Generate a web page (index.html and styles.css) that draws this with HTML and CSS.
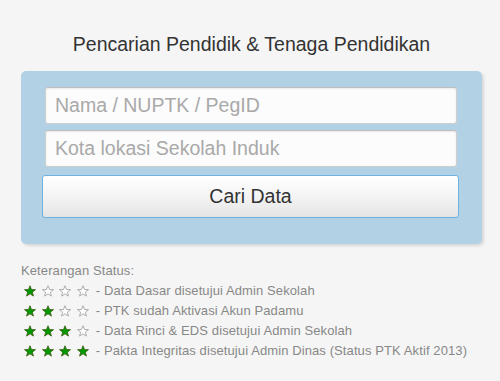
FILE: index.html
```html
<!DOCTYPE html>
<html>
<head>
<meta charset="utf-8">
<link rel="stylesheet" href="styles.css">
</head>
<body>
<div class="wrap">
  <h1 class="title">Pencarian Pendidik &amp; Tenaga Pendidikan</h1>
  <div class="panel">
    <input class="field" type="text" placeholder="Nama / NUPTK / PegID">
    <input class="field" type="text" placeholder="Kota lokasi Sekolah Induk">
    <button class="btn" type="button">Cari Data</button>
  </div>
  <div class="legend">
    <div class="legend-title">Keterangan Status:</div>
    <div class="row">
      <span class="stars">
        <svg class="star" viewBox="0 0 24 24"><polygon class="on" points="12,1.5 15,9 23,9.3 16.7,14.3 18.9,22.2 12,17.6 5.1,22.2 7.3,14.3 1,9.3 9,9"/></svg>
        <svg class="star" viewBox="0 0 24 24"><polygon class="off" points="12,1.5 15,9 23,9.3 16.7,14.3 18.9,22.2 12,17.6 5.1,22.2 7.3,14.3 1,9.3 9,9"/></svg>
        <svg class="star" viewBox="0 0 24 24"><polygon class="off" points="12,1.5 15,9 23,9.3 16.7,14.3 18.9,22.2 12,17.6 5.1,22.2 7.3,14.3 1,9.3 9,9"/></svg>
        <svg class="star" viewBox="0 0 24 24"><polygon class="off" points="12,1.5 15,9 23,9.3 16.7,14.3 18.9,22.2 12,17.6 5.1,22.2 7.3,14.3 1,9.3 9,9"/></svg>
      </span>
      <span class="desc">- Data Dasar disetujui Admin Sekolah</span>
    </div>
    <div class="row">
      <span class="stars">
        <svg class="star" viewBox="0 0 24 24"><polygon class="on" points="12,1.5 15,9 23,9.3 16.7,14.3 18.9,22.2 12,17.6 5.1,22.2 7.3,14.3 1,9.3 9,9"/></svg>
        <svg class="star" viewBox="0 0 24 24"><polygon class="on" points="12,1.5 15,9 23,9.3 16.7,14.3 18.9,22.2 12,17.6 5.1,22.2 7.3,14.3 1,9.3 9,9"/></svg>
        <svg class="star" viewBox="0 0 24 24"><polygon class="off" points="12,1.5 15,9 23,9.3 16.7,14.3 18.9,22.2 12,17.6 5.1,22.2 7.3,14.3 1,9.3 9,9"/></svg>
        <svg class="star" viewBox="0 0 24 24"><polygon class="off" points="12,1.5 15,9 23,9.3 16.7,14.3 18.9,22.2 12,17.6 5.1,22.2 7.3,14.3 1,9.3 9,9"/></svg>
      </span>
      <span class="desc">- PTK sudah Aktivasi Akun Padamu</span>
    </div>
    <div class="row">
      <span class="stars">
        <svg class="star" viewBox="0 0 24 24"><polygon class="on" points="12,1.5 15,9 23,9.3 16.7,14.3 18.9,22.2 12,17.6 5.1,22.2 7.3,14.3 1,9.3 9,9"/></svg>
        <svg class="star" viewBox="0 0 24 24"><polygon class="on" points="12,1.5 15,9 23,9.3 16.7,14.3 18.9,22.2 12,17.6 5.1,22.2 7.3,14.3 1,9.3 9,9"/></svg>
        <svg class="star" viewBox="0 0 24 24"><polygon class="on" points="12,1.5 15,9 23,9.3 16.7,14.3 18.9,22.2 12,17.6 5.1,22.2 7.3,14.3 1,9.3 9,9"/></svg>
        <svg class="star" viewBox="0 0 24 24"><polygon class="off" points="12,1.5 15,9 23,9.3 16.7,14.3 18.9,22.2 12,17.6 5.1,22.2 7.3,14.3 1,9.3 9,9"/></svg>
      </span>
      <span class="desc">- Data Rinci &amp; EDS disetujui Admin Sekolah</span>
    </div>
    <div class="row">
      <span class="stars">
        <svg class="star" viewBox="0 0 24 24"><polygon class="on" points="12,1.5 15,9 23,9.3 16.7,14.3 18.9,22.2 12,17.6 5.1,22.2 7.3,14.3 1,9.3 9,9"/></svg>
        <svg class="star" viewBox="0 0 24 24"><polygon class="on" points="12,1.5 15,9 23,9.3 16.7,14.3 18.9,22.2 12,17.6 5.1,22.2 7.3,14.3 1,9.3 9,9"/></svg>
        <svg class="star" viewBox="0 0 24 24"><polygon class="on" points="12,1.5 15,9 23,9.3 16.7,14.3 18.9,22.2 12,17.6 5.1,22.2 7.3,14.3 1,9.3 9,9"/></svg>
        <svg class="star" viewBox="0 0 24 24"><polygon class="on" points="12,1.5 15,9 23,9.3 16.7,14.3 18.9,22.2 12,17.6 5.1,22.2 7.3,14.3 1,9.3 9,9"/></svg>
      </span>
      <span class="desc">- Pakta Integritas disetujui Admin Dinas (Status PTK Aktif 2013)</span>
    </div>
  </div>
</div>
</body>
</html>
```

FILE: styles.css
```css
html, body {
  margin: 0;
  padding: 0;
  background: #f5f5f5;
  font-family: "Liberation Sans", Arial, sans-serif;
}

.wrap {
  width: 461px;
  margin-left: 21px;
  padding-top: 32px;
}

.title {
  margin: 0;
  font-size: 19.5px;
  font-weight: normal;
  line-height: 24px;
  color: #333;
  text-align: center;
}

.panel {
  margin-top: 15px;
  background: #b3d1e5;
  border-radius: 5px;
  padding: 16px 23px 26px 21px;
  box-shadow: 2px 2px 3px rgba(0, 0, 0, 0.12);
  display: flex;
  flex-direction: column;
}

.field {
  box-sizing: border-box;
  width: 412px;
  height: 37px;
  margin: 0 0 6px 3px;
  padding: 0 9px;
  border: 1px solid #cfcfcf;
  border-top-color: #bdbdbd;
  border-radius: 3px;
  background: #fcfcfc;
  box-shadow: inset 0 1px 2px rgba(0, 0, 0, 0.08);
  font-family: "Liberation Sans", Arial, sans-serif;
  font-size: 19.5px;
  color: #333;
  outline: none;
}

.field::placeholder {
  color: #a9a9a9;
}

.btn {
  box-sizing: border-box;
  margin-top: 2px;
  width: 417px;
  height: 43px;
  border: 1px solid #6db3e2;
  border-radius: 3px;
  background: linear-gradient(to bottom, #ffffff 0%, #f4f4f4 50%, #e4e4e4 100%);
  font-family: "Liberation Sans", Arial, sans-serif;
  font-size: 19.5px;
  color: #333;
  padding: 0;
}

.legend {
  margin-top: 17px;
  font-size: 13px;
  line-height: 20px;
  letter-spacing: 0.1px;
  color: #888;
}

.row {
  display: flex;
  align-items: center;
  height: 20px;
}

.stars {
  display: flex;
  gap: 5.6px;
  padding-left: 3px;
  margin-right: 7px;
}

.star {
  width: 12px;
  height: 12px;
  display: block;
}

.star .on {
  fill: #009900;
  stroke: #3d5a12;
  stroke-width: 1.6;
  stroke-linejoin: round;
}

.star .off {
  fill: #ffffff;
  stroke: #9a9a9a;
  stroke-width: 1.6;
  stroke-linejoin: round;
}
```
